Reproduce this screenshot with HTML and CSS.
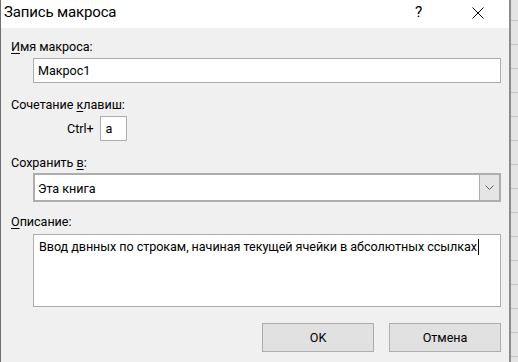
FILE: index.html
```html
<!DOCTYPE html>
<html lang="ru">
<head>
<meta charset="utf-8">
<title>Запись макроса</title>
<link rel="stylesheet" href="styles.css">
</head>
<body>
<div class="screen">
  <div class="dialog">
    <div class="titlebar">
      <span class="title">Запись макроса</span>
      <span class="tb-help">?</span>
      <span class="tb-close">
        <svg width="12" height="12" viewBox="0 0 12 12"><path d="M0.5 0.5 L11.5 11.5 M11.5 0.5 L0.5 11.5" stroke="#000" stroke-width="1" fill="none"/></svg>
      </span>
    </div>
    <div class="content">
      <div class="lbl lbl-first"><u>И</u>мя макроса:</div>
      <div class="field">Макрос1</div>
      <div class="lbl lbl-gap"><span>Сочетание <u>к</u>лавиш:</span></div>
      <div class="shortcut">
        <span class="ctrl">Ctrl+</span>
        <div class="keybox">a</div>
      </div>
      <div class="lbl lbl-gap">Сохранить <u>в</u>:</div>
      <div class="combo">
        <div class="combo-text">Эта книга</div>
        <div class="combo-btn">
          <svg width="9" height="5" viewBox="0 0 9 5"><path d="M0.5 0.5 L4.5 4.5 L8.5 0.5" stroke="#606060" stroke-width="1" fill="none"/></svg>
        </div>
      </div>
      <div class="lbl lbl-desc"><u>О</u>писание:</div>
      <div class="textarea">Ввод двнных по строкам, начиная текущей ячейки в абсолютных ссылках<span class="caret"></span></div>
      <div class="buttons">
        <div class="btn">OK</div>
        <div class="btn">Отмена</div>
      </div>
    </div>
  </div>
  <div class="backdrop"></div>
</div>
</body>
</html>
```

FILE: styles.css
```css
* { box-sizing: border-box; }
html, body { margin: 0; padding: 0; }
body {
  width: 518px;
  height: 362px;
  overflow: hidden;
  font-family: Roboto, "Noto Sans", sans-serif;
  font-size: 12.6px;
  letter-spacing: -0.05px;
  color: #000;
}
.screen {
  display: flex;
  width: 518px;
  height: 362px;
}
.dialog {
  width: 511px;
  height: 362px;
  border-left: 1px solid #707070;
  border-right: 2px solid #8c8c8c;
  background: #f0f0f0;
  display: flex;
  flex-direction: column;
}
.backdrop {
  flex: 1;
  background-color: #e4e4e4;
  background-image: repeating-linear-gradient(to bottom, transparent 0, transparent 20px, #c4c4c4 20px, #c4c4c4 21px, transparent 21px, transparent 24px);
}
.titlebar {
  height: 28px;
  background: #fff;
  display: flex;
  align-items: flex-start;
  padding-left: 3px;
}
.title {
  font-size: 15px;
  letter-spacing: -0.15px;
  flex: 1;
  line-height: 25px;
}
.tb-help {
  font-size: 15.5px;
  width: 8px;
  line-height: 25px;
  margin-right: 49px;
}
.tb-close {
  width: 12px;
  height: 12px;
  margin-top: 7px;
  margin-right: 25px;
  display: flex;
}
.content {
  padding-left: 10px;
  display: flex;
  flex-direction: column;
}
.lbl {
  line-height: 18px;
  height: 18px;
}
.lbl u { text-underline-offset: 2px; }
.lbl-first { margin-top: 10px; }
.lbl-gap { margin-top: 13px; }
.lbl-desc { margin-top: 11px; }
.field {
  margin-top: 2px;
  margin-left: 22px;
  width: 468px;
  height: 25px;
  background: #fff;
  border: 1px solid #adadad;
  padding-left: 4px;
  line-height: 23px;
}
.shortcut {
  margin-top: 2px;
  display: flex;
  align-items: center;
  padding-left: 56px;
  gap: 6px;
  height: 25px;
}
.keybox {
  width: 27px;
  height: 25px;
  background: #fff;
  border: 1px solid #adadad;
  padding-left: 5px;
  line-height: 23px;
}
.combo {
  margin-top: 1px;
  margin-left: 22px;
  width: 468px;
  height: 29px;
  border: 2px solid #adadad;
  display: flex;
}
.combo-text {
  flex: 1;
  background: #fff;
  padding-left: 3px;
  padding-top: 1px;
  line-height: 25px;
}
.combo-btn {
  width: 20px;
  background: #e5e5e5;
  border-left: 1px solid #adadad;
  display: flex;
  align-items: center;
  justify-content: center;
}
.textarea {
  margin-top: 3px;
  margin-left: 22px;
  width: 468px;
  height: 73px;
  background: #fff;
  border: 1px solid #adadad;
  padding: 3px 4px 0 5px;
  line-height: 18px;
  letter-spacing: -0.06px;
  white-space: nowrap;
  overflow: hidden;
}
.caret {
  display: inline-block;
  width: 1px;
  height: 16px;
  background: #000;
  vertical-align: -4px;
  margin-left: 1px;
}
.buttons {
  margin-top: 16px;
  display: flex;
  justify-content: flex-end;
  gap: 15px;
  width: 490px;
}
.btn {
  width: 112px;
  height: 29px;
  background: #e1e1e1;
  border: 1px solid #adadad;
  text-align: center;
  padding-top: 1px;
  line-height: 26px;
}
```
